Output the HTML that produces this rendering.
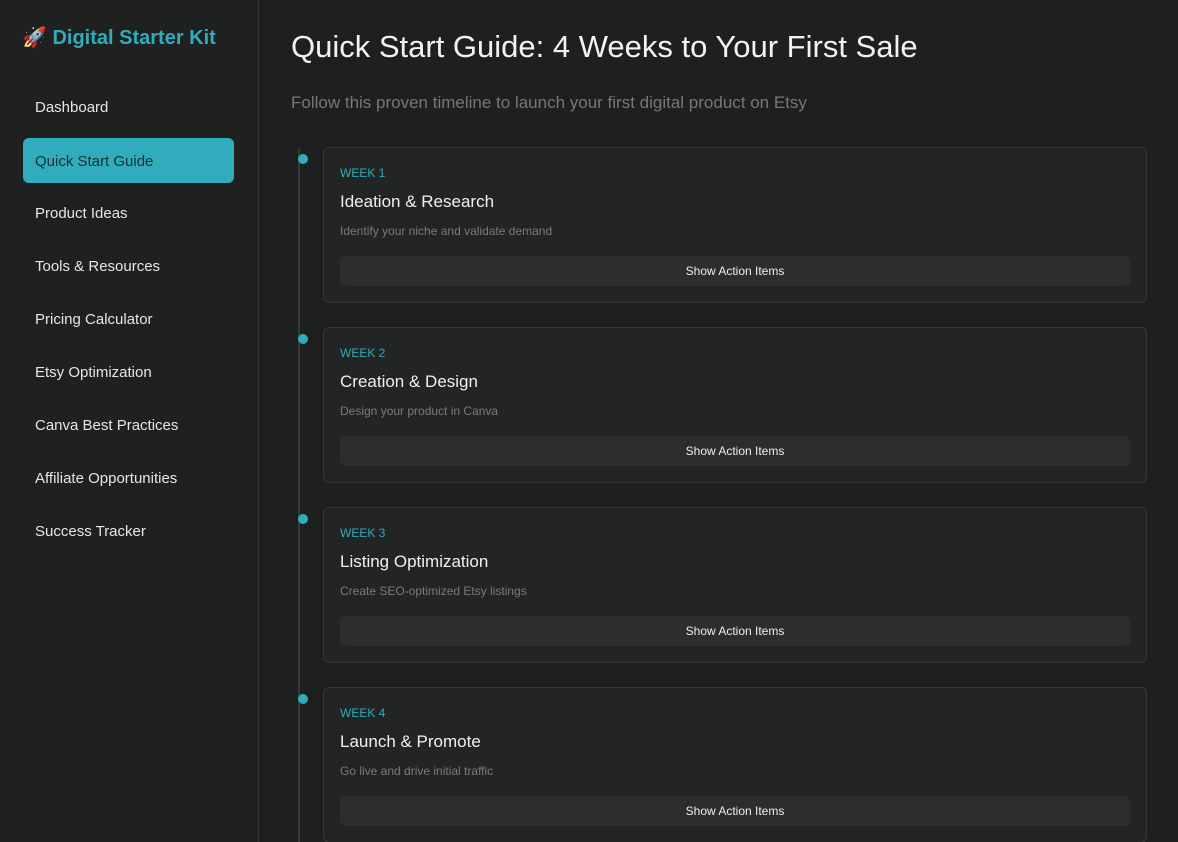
<!DOCTYPE html>
<html><head><meta charset="utf-8"><style>
*{margin:0;padding:0;box-sizing:border-box}
html,body{width:1178px;height:842px;overflow:hidden}
body{background:#1e1f1f;font-family:"Liberation Sans",sans-serif;position:relative}
.side{position:absolute;left:0;top:0;width:259px;height:842px;background:#1f2020;border-right:1px solid #353737}
.logo{position:absolute;left:22px;top:25px;font-size:20px;font-weight:bold;color:#30acbc}
.nav{position:absolute;left:23px;width:211px;height:45px;line-height:47px;padding-left:12px;font-size:15px;color:#e6e6e6;border-radius:6px}
.nav.act{background:#30acbc;color:#133035}
h1{position:absolute;left:291px;top:29px;font-size:31px;font-weight:normal;color:#f2f2f2}
.sub{position:absolute;left:291px;top:93px;font-size:17px;color:#777}
.line{position:absolute;left:298px;top:148px;width:2px;height:694px;background:#363838}
.dot{position:absolute;left:298px;width:10px;height:10px;border-radius:50%;background:#30acbc}
.card{position:absolute;left:323px;width:824px;height:156px;background:#232424;border:1px solid #363838;border-radius:6px}
.wk{position:absolute;left:16px;top:18px;font-size:12px;color:#30acbc}
.tt{position:absolute;left:16px;top:44px;font-size:17px;color:#f0f0f0}
.ds{position:absolute;left:16px;top:76px;font-size:12px;color:#7a7a7a}
.bt{position:absolute;left:16px;top:108px;width:790px;height:30px;line-height:30px;background:#2c2d2d;border-radius:5px;text-align:center;font-size:12px;color:#eee}
</style></head><body>
<div class="side">
<div class="logo">🚀 Digital Starter Kit</div>
<div class="nav" style="top:84px">Dashboard</div>
<div class="nav act" style="top:138px">Quick Start Guide</div>
<div class="nav" style="top:190px">Product Ideas</div>
<div class="nav" style="top:243px">Tools &amp; Resources</div>
<div class="nav" style="top:296px">Pricing Calculator</div>
<div class="nav" style="top:349px">Etsy Optimization</div>
<div class="nav" style="top:402px">Canva Best Practices</div>
<div class="nav" style="top:455px">Affiliate Opportunities</div>
<div class="nav" style="top:508px">Success Tracker</div>
</div>
<h1>Quick Start Guide: 4 Weeks to Your First Sale</h1>
<div class="sub">Follow this proven timeline to launch your first digital product on Etsy</div>
<div class="line"></div>
<div class="dot" style="top:154px"></div>
<div class="dot" style="top:334px"></div>
<div class="dot" style="top:514px"></div>
<div class="dot" style="top:694px"></div>
<div class="card" style="top:147px"><div class="wk">WEEK 1</div><div class="tt">Ideation &amp; Research</div><div class="ds">Identify your niche and validate demand</div><div class="bt">Show Action Items</div></div>
<div class="card" style="top:327px"><div class="wk">WEEK 2</div><div class="tt">Creation &amp; Design</div><div class="ds">Design your product in Canva</div><div class="bt">Show Action Items</div></div>
<div class="card" style="top:507px"><div class="wk">WEEK 3</div><div class="tt">Listing Optimization</div><div class="ds">Create SEO-optimized Etsy listings</div><div class="bt">Show Action Items</div></div>
<div class="card" style="top:687px"><div class="wk">WEEK 4</div><div class="tt">Launch &amp; Promote</div><div class="ds">Go live and drive initial traffic</div><div class="bt">Show Action Items</div></div>
</body></html>
